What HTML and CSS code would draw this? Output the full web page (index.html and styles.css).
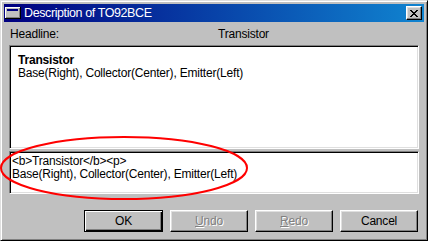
FILE: index.html
```html
<!DOCTYPE html>
<html>
<head>
    <title>Description of TO92BCE</title>
    <link rel="stylesheet" href="styles.css">
</head>
<body>
    <div class="window">
        <div class="titlebar">
            <svg class="app-icon" width="16" height="12" viewBox="0 0 16 12" shape-rendering="crispEdges">
                <rect x="0" y="0" width="16" height="12" fill="#000"/>
                <rect x="0" y="0" width="15" height="11" fill="#fff"/>
                <rect x="1" y="1" width="14" height="10" fill="#808080"/>
                <rect x="1" y="1" width="13" height="9" fill="#c0c0c0"/>
                <rect x="2" y="2" width="11" height="2" fill="#000080"/>
            </svg>
            <span class="title">Description of TO92BCE</span>
            <div class="close">
                <svg width="8" height="7" viewBox="0 0 8 7" shape-rendering="crispEdges" fill="#000">
                    <rect x="0" y="0" width="2" height="1"/><rect x="6" y="0" width="2" height="1"/>
                    <rect x="1" y="1" width="2" height="1"/><rect x="5" y="1" width="2" height="1"/>
                    <rect x="2" y="2" width="4" height="1"/>
                    <rect x="3" y="3" width="2" height="1"/>
                    <rect x="2" y="4" width="4" height="1"/>
                    <rect x="1" y="5" width="2" height="1"/><rect x="5" y="5" width="2" height="1"/>
                    <rect x="0" y="6" width="2" height="1"/><rect x="6" y="6" width="2" height="1"/>
                </svg>
            </div>
        </div>

        <div class="content">
            <div class="headline-row">
                <span>Headline:</span>
                <span>Transistor</span>
            </div>

            <div class="field preview">
                <b>Transistor</b>
                <p>Base(Right), Collector(Center), Emitter(Left)</p>
            </div>

            <div class="splitter"></div>

            <div class="field source">&lt;b&gt;Transistor&lt;/b&gt;&lt;p&gt;<br>Base(Right), Collector(Center), Emitter(Left)</div>

            <div class="buttons">
                <div class="btn default">OK</div>
                <div class="btn disabled"><u>U</u>ndo</div>
                <div class="btn disabled"><u>R</u>edo</div>
                <div class="btn">Cancel</div>
            </div>
        </div>
    </div>

    <!-- red annotation ring around the source box -->
    <svg class="annotation" width="428" height="241" viewBox="0 0 428 241">
        <ellipse cx="124" cy="168" rx="123" ry="31" fill="none" stroke="#f00" stroke-width="2"/>
    </svg>
</body>
</html>
```

FILE: styles.css
```css
body {
    margin: 0;
    position: relative;
    width: 428px;
    height: 241px;
    overflow: hidden;
    font-family: "Liberation Sans", Arial, sans-serif;
    font-size: 12px;
    letter-spacing: -0.2px;
    color: #000;
}
.window {
    box-sizing: border-box;
    width: 428px;
    height: 241px;
    background: #c0c0c0;
    border: 1px solid;
    border-color: #dfdfdf #000 #000 #dfdfdf;
    box-shadow: inset 1px 1px #fff, inset -1px -1px #808080;
    padding: 3px;
}
.titlebar {
    height: 18px;
    display: flex;
    align-items: center;
    background: linear-gradient(to right, #000080, #1084d0);
    color: #fff;
}
.app-icon {
    margin-left: 1px;
    margin-right: 3px;
}
.title {
    flex: 1;
    font-size: 12.5px;
    letter-spacing: -0.4px;
}
.close {
    box-sizing: border-box;
    width: 16px;
    height: 14px;
    margin-right: 2px;
    display: flex;
    align-items: center;
    justify-content: center;
    background: #c0c0c0;
    border: 1px solid;
    border-color: #fff #000 #000 #fff;
    box-shadow: inset -1px -1px #808080, inset 1px 1px #dfdfdf;
}
.content {
    padding: 5px 5px 0 5px;
}
.headline-row {
    display: grid;
    grid-template-columns: 208px 1fr;
    line-height: 14px;
    padding-left: 1px;
}
.field {
    box-sizing: border-box;
    background: #fff;
    border: 1px solid;
    border-color: #808080 #fff #fff #808080;
    box-shadow: inset 1px 1px #000, inset -1px -1px #dfdfdf;
    line-height: 13px;
}
.preview {
    margin-top: 4px;
    height: 104px;
    padding: 8px 8px;
}
.preview p {
    margin: 0;
}
.splitter {
    height: 2px;
}
.source {
    height: 43px;
    padding: 3px 2px;
}
.buttons {
    display: flex;
    justify-content: flex-end;
    gap: 7px;
    margin-top: 16px;
    padding-right: 1px;
}
.btn {
    box-sizing: border-box;
    width: 78px;
    height: 22px;
    display: flex;
    align-items: center;
    justify-content: center;
    border: 1px solid;
    border-color: #fff #000 #000 #fff;
    box-shadow: inset -1px -1px #808080, inset 1px 1px #dfdfdf;
}
.btn.default {
    width: 79px;
    border-color: #000;
    box-shadow: inset 1px 1px #fff, inset -1px -1px #000, inset -2px -2px #808080;
}
.btn.disabled {
    color: #808080;
    text-shadow: 1px 1px #fff;
}
.annotation {
    position: absolute;
    left: 0;
    top: 0;
    pointer-events: none;
}
```
